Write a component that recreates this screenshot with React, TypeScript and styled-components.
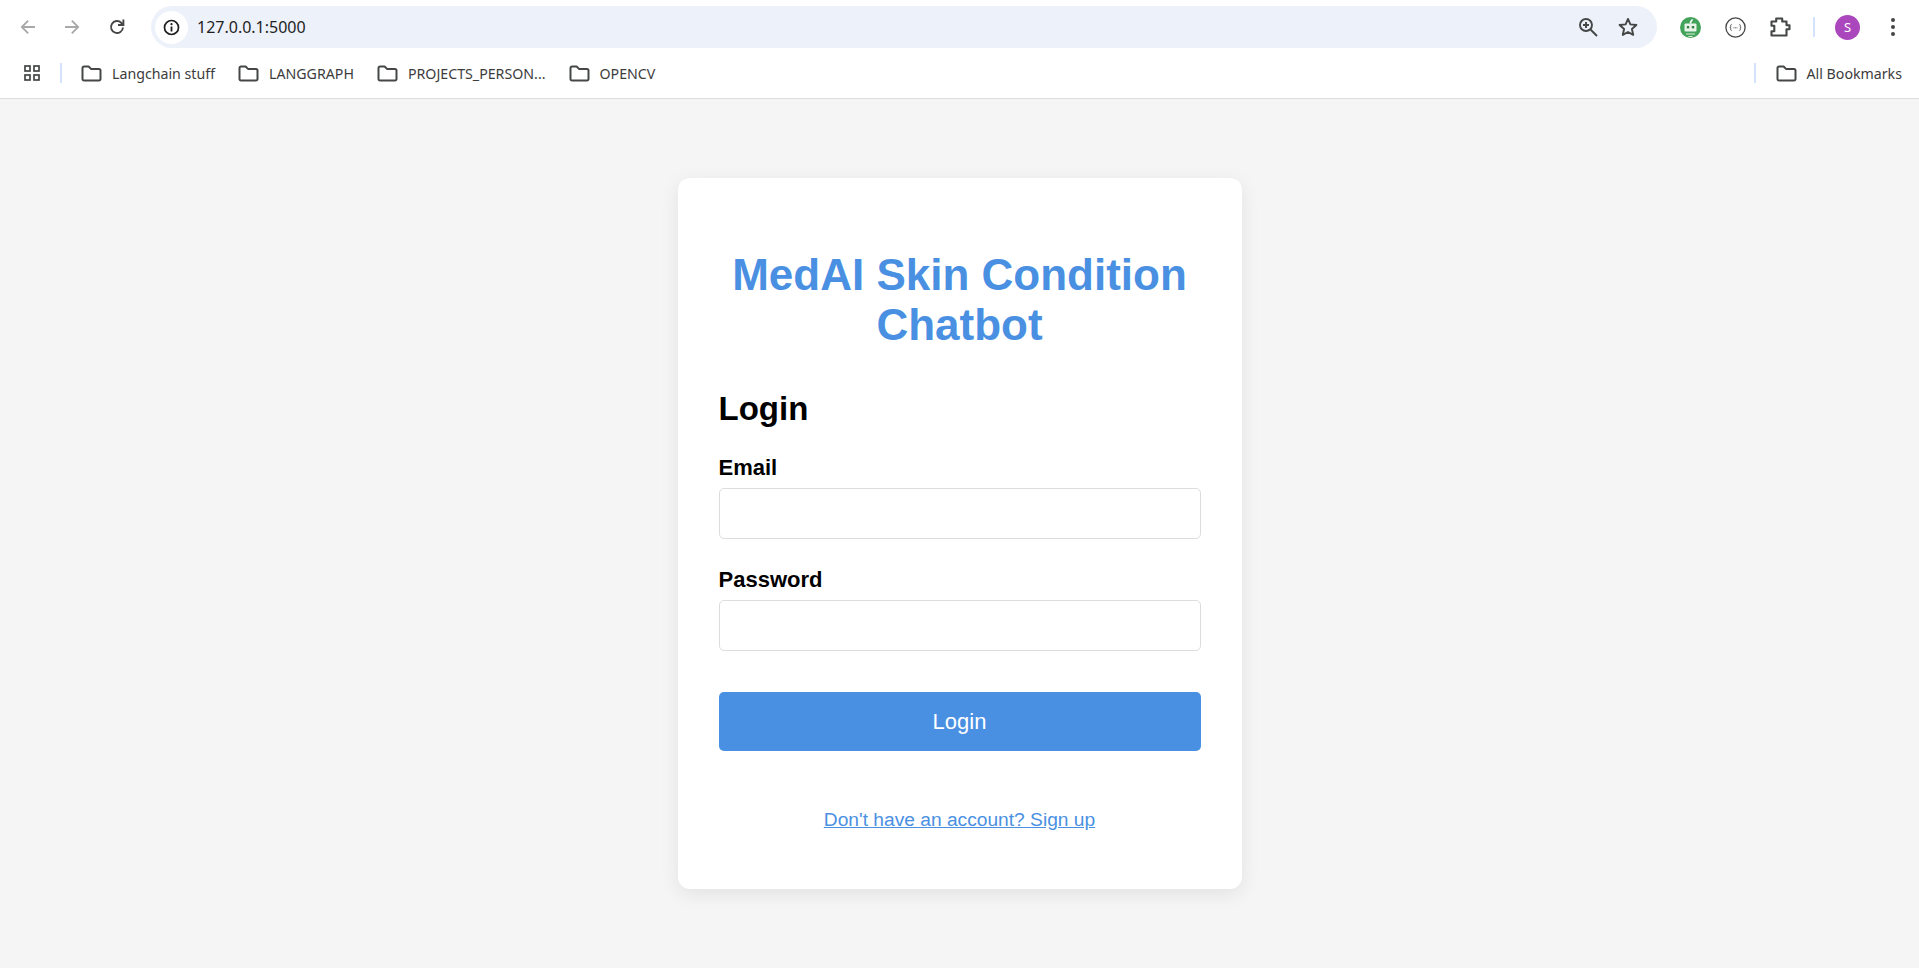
import React from 'react'
import styled, { createGlobalStyle } from 'styled-components'

const GlobalStyle = createGlobalStyle`
  html, body {
    margin: 0;
    padding: 0;
    background: #f5f5f5;
  }
  * {
    box-sizing: border-box;
  }
`

const Page = styled.div`
  display: flex;
  flex-direction: column;
  height: 968px;
  overflow: hidden;
`

const Browser = styled.header`
  background: #fff;
  border-bottom: 1px solid #dcdcdc;
  height: 99px;
  flex-shrink: 0;
`

const Toolbar = styled.div`
  display: flex;
  align-items: center;
  height: 54px;
  padding: 0 0 0 20px;
`

const NavButton = styled.span<{ $width: number }>`
  display: flex;
  align-items: center;
  justify-content: flex-start;
  width: ${(p) => p.$width}px;
  flex-shrink: 0;
`

const AddressBar = styled.div`
  display: flex;
  align-items: center;
  width: 1506px;
  height: 42px;
  margin-left: 6px;
  padding: 0 19px 0 4px;
  background: #ecf1fa;
  border-radius: 21px;
`

const SiteBadge = styled.span`
  display: flex;
  align-items: center;
  justify-content: center;
  width: 33px;
  height: 33px;
  background: #fff;
  border-radius: 50%;
  flex-shrink: 0;
`

const Url = styled.span`
  margin-left: 9px;
  font: 16px 'Noto Sans', sans-serif;
  color: #1f1f1f;
  flex: 1;
`

const BarIcons = styled.div`
  display: flex;
  align-items: center;
  gap: 20px;
`

const ToolIcons = styled.div`
  display: flex;
  align-items: center;
  margin-left: 23px;
  gap: 24px;
`

const Separator = styled.span<{ $height: number }>`
  display: block;
  width: 2px;
  height: ${(p) => p.$height}px;
  background: #d3e3fd;
  flex-shrink: 0;
`

const ToolSeparator = styled(Separator)`
  margin: 0 -3px 0 -2px;
`

const ListSeparator = styled(Separator)`
  margin-right: -4px;
`

const Avatar = styled.span`
  display: flex;
  align-items: center;
  justify-content: center;
  width: 25px;
  height: 25px;
  margin-left: -1px;
  background: #ab47bc;
  border-radius: 50%;
  color: #fff;
  font: 13px 'Noto Sans', sans-serif;
`

const Kebab = styled.span`
  display: flex;
  margin-left: 7px;
`

const BookmarksBar = styled.div`
  display: flex;
  align-items: center;
  height: 38px;
  padding-left: 24px;
`

const BookmarkList = styled.div`
  display: flex;
  align-items: center;
  flex: 1;
  margin-left: 20px;
  gap: 23px;
`

const Bookmark = styled.span`
  display: flex;
  align-items: center;
  gap: 10px;
  font: 14.2px 'Noto Sans', sans-serif;
  color: #3c3c3c;
  white-space: nowrap;
`

const AllBookmarks = styled(Bookmark)`
  margin-left: 20px;
  margin-right: 17px;
`

const Main = styled.main`
  display: flex;
  justify-content: center;
  padding-top: 79px;
  flex: 1;
`

const Card = styled.div`
  width: 564px;
  height: 711px;
  padding: 72px 41px 0;
  background: #fff;
  border-radius: 12px;
  box-shadow: 0 5px 19px rgba(0, 0, 0, 0.08);
  font-family: 'Liberation Sans', Arial, sans-serif;
`

const Title = styled.h1`
  margin: 0 0 40px;
  font-size: 44px;
  line-height: 50px;
  font-weight: 700;
  text-align: center;
  color: #4a90e2;
`

const Subtitle = styled.h2`
  margin: 0 0 28px;
  font-size: 33px;
  line-height: 37px;
  font-weight: 700;
  color: #000;
`

const Field = styled.div`
  margin-bottom: 28px;
`

const Label = styled.label`
  display: block;
  margin-bottom: 8px;
  font-size: 22px;
  line-height: 25px;
  font-weight: 700;
  color: #000;
`

const Input = styled.input`
  display: block;
  width: 100%;
  height: 51px;
  border: 1px solid #dddddd;
  border-radius: 5px;
  background: #fff;
  outline: none;
`

const SubmitButton = styled.button`
  display: block;
  width: 100%;
  height: 59px;
  margin-top: 41px;
  border: none;
  border-radius: 5px;
  background: #4a90e2;
  color: #fff;
  font-family: inherit;
  font-size: 22px;
`

const Footer = styled.p`
  margin: 57px 0 0;
  font-size: 19.2px;
  line-height: 24px;
  text-align: center;
`

const SignUpLink = styled.a`
  color: #4a90e2;
  text-decoration: underline;
`

const FolderIcon = () => (
  <svg width="21" height="17" viewBox="0 0 21 17" fill="none" stroke="#444746" strokeWidth="2" strokeLinejoin="round">
    <path d="M1.5 3a1.5 1.5 0 0 1 1.5-1.5h4.6l2.4 2.4h8a1.5 1.5 0 0 1 1.5 1.5v8.600a1.500 1.500 0 0 1-1.500 1.500H3a1.500 1.500 0 0 1-1.500-1.500z" />
  </svg>
)

const ArrowIcon = ({ flip }: { flip?: boolean }) => (
  <svg width="16" height="16" viewBox="0 0 16 16" fill="none" stroke="#a8a8a8" strokeWidth="1.8" style={flip ? { transform: 'scaleX(-1)' } : undefined}>
    <path d="M15 8H2M8.2 1.6 1.8 8l6.4 6.4" />
  </svg>
)

const ReloadIcon = () => (
  <svg width="18" height="18" viewBox="0 0 18 18" fill="none" stroke="#444746" strokeWidth="1.9">
    <path d="M15 9.5A6 6 0 1 1 13.2 4.7L15 6.5" />
    <path d="M15.4 1.6v5.4H10" />
  </svg>
)

const InfoIcon = () => (
  <svg width="17" height="17" viewBox="0 0 17 17" fill="none">
    <circle cx="8.5" cy="8.5" r="7" stroke="#1f1f1f" strokeWidth="1.7" />
    <path d="M8.5 7.5v5" stroke="#1f1f1f" strokeWidth="1.8" />
    <circle cx="8.5" cy="5.2" r="1.1" fill="#1f1f1f" />
  </svg>
)

const ZoomIcon = () => (
  <svg width="20" height="20" viewBox="0 0 20 20" fill="none" stroke="#444746" strokeWidth="1.9">
    <circle cx="8" cy="8" r="6" />
    <path d="M12.5 12.5 19 19M8 5v6M5 8h6" />
  </svg>
)

const StarIcon = () => (
  <svg width="20" height="20" viewBox="0 0 20 20" fill="none" stroke="#444746" strokeWidth="1.9" strokeLinejoin="round">
    <path d="M10 1.9l2.4 5.5 6 .6-4.5 4 1.3 5.9L10 15l-5.2 2.9 1.3-5.9-4.5-4 6-.6z" />
  </svg>
)

const RobotIcon = () => (
  <svg width="21" height="21" viewBox="0 0 21 21">
    <circle cx="10.5" cy="10.5" r="10.5" fill="#43a35b" />
    <path d="M9.6 6.5c.1-2 1-3.500 2.700-4.500l.8.900c-1.100.9-1.700 2.100-1.700 3.600z" fill="#fff" />
    <rect x="4.5" y="6.5" width="12" height="8" rx="1" fill="#e8f3ea" />
    <rect x="6.8" y="9" width="2.4" height="2.4" fill="#37803f" />
    <rect x="11.8" y="9" width="2.4" height="2.4" fill="#37803f" />
    <path d="M6 17h9M8.500 19.500h4" stroke="#d8ecdb" strokeWidth="1.2" />
  </svg>
)

const BracesIcon = () => (
  <svg width="21" height="21" viewBox="0 0 21 21" fill="none">
    <circle cx="10.5" cy="10.5" r="9.6" stroke="#444746" strokeWidth="1.3" />
    <path d="M6.7 7.500c-1 0-1 .6-1 1.300v.8c0 .6-.3.9-.8.900.5 0 .8.300.8.900v.8c0 .7 0 1.300 1 1.300M14.300 7.500c1 0 1 .6 1 1.300v.8c0 .6.300.9.800.900-.5 0-.8.300-.8.900v.8c0 .7 0 1.300-1 1.300" stroke="#444746" strokeWidth=".9" />
    <path d="M8.600 10.800h.9M10.100 10.800h.9M11.600 10.800h.9" stroke="#444746" strokeWidth=".9" />
  </svg>
)

const PuzzleIcon = () => (
  <svg width="21" height="20" viewBox="0 0 21 20" fill="none" stroke="#444746" strokeWidth="2.1" strokeLinejoin="round">
    <path d="M1.500 4.500h4.700V1.500h6v3h4.300v3.700h3v4h-3v6.300H1.500v-4.300h2.800v-5.400H1.500z" />
  </svg>
)

const AppsIcon = () => (
  <svg width="16" height="16" viewBox="0 0 16 16" fill="none" stroke="#444746" strokeWidth="1.7">
    <rect x="1" y="1" width="5" height="5" />
    <rect x="10" y="1" width="5" height="5" />
    <rect x="1" y="10" width="5" height="5" />
    <rect x="10" y="10" width="5" height="5" />
  </svg>
)

const KebabIcon = () => (
  <svg width="4" height="18" viewBox="0 0 4 18" fill="#444746">
    <circle cx="2" cy="2" r="2" />
    <circle cx="2" cy="9" r="2" />
    <circle cx="2" cy="16" r="2" />
  </svg>
)

const bookmarks = ['Langchain stuff', 'LANGGRAPH', 'PROJECTS_PERSON...', 'OPENCV']

export default function App() {
  return (
    <Page>
      <GlobalStyle />
      <Browser>
        <Toolbar>
          <NavButton $width={44}><ArrowIcon /></NavButton>
          <NavButton $width={44}><ArrowIcon flip /></NavButton>
          <NavButton $width={37}><ReloadIcon /></NavButton>
          <AddressBar>
            <SiteBadge><InfoIcon /></SiteBadge>
            <Url>127.0.0.1:5000</Url>
            <BarIcons>
              <ZoomIcon />
              <StarIcon />
            </BarIcons>
          </AddressBar>
          <ToolIcons>
            <RobotIcon />
            <BracesIcon />
            <PuzzleIcon />
            <ToolSeparator $height={20} />
            <Avatar>S</Avatar>
            <Kebab><KebabIcon /></Kebab>
          </ToolIcons>
        </Toolbar>
        <BookmarksBar>
          <AppsIcon />
          <BookmarkList>
            <ListSeparator $height={20} />
            {bookmarks.map((name) => (
              <Bookmark key={name}>
                <FolderIcon />
                {name}
              </Bookmark>
            ))}
          </BookmarkList>
          <Separator $height={20} />
          <AllBookmarks>
            <FolderIcon />
            All Bookmarks
          </AllBookmarks>
        </BookmarksBar>
      </Browser>
      <Main>
        <Card>
          <Title>MedAI Skin Condition Chatbot</Title>
          <Subtitle>Login</Subtitle>
          <Field>
            <Label htmlFor="email">Email</Label>
            <Input id="email" type="email" />
          </Field>
          <Field>
            <Label htmlFor="password">Password</Label>
            <Input id="password" type="password" />
          </Field>
          <SubmitButton type="button">Login</SubmitButton>
          <Footer>
            <SignUpLink href="#signup">Don't have an account? Sign up</SignUpLink>
          </Footer>
        </Card>
      </Main>
    </Page>
  )
}
